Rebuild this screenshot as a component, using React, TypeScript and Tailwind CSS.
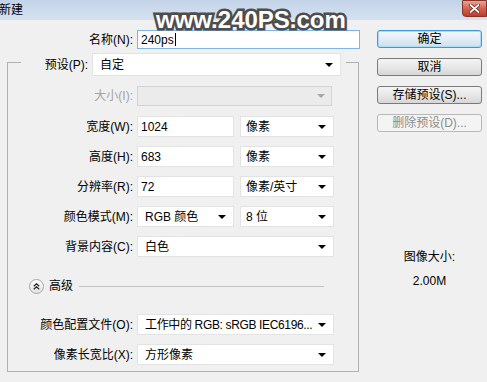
import React from "react";

const Arrow = ({ color = "#000" }: { color?: string }) => (
  <svg width="8" height="4" viewBox="0 0 8 4" className="shrink-0">
    <path d="M0 0H8L4 4Z" fill={color} />
  </svg>
);

const Select = ({
  text,
  w,
  h = "h-[21px]",
  pl = "pl-[7px]",
  tight,
}: {
  text: string;
  w: string;
  h?: string;
  pl?: string;
  tight?: boolean;
}) => (
  <div
    className={`${w} ${h} ${pl} pr-[7px] bg-white border border-[#e3e3e3] flex items-center justify-between box-border`}
  >
    <span className={`leading-none whitespace-nowrap ${tight ? "tracking-[-0.35px]" : ""}`}>{text}</span>
    <Arrow />
  </div>
);

const Input = ({ text, w }: { text: string; w: string }) => (
  <div
    className={`${w} h-[21px] pl-[3px] bg-white border border-[#e3e3e3] flex items-center box-border`}
  >
    <span className="leading-none">{text}</span>
  </div>
);

const Label = ({ text, gray }: { text: string; gray?: boolean }) => (
  <div
    className={`w-[129px] text-right pr-[4px] leading-none whitespace-nowrap ${gray ? "text-[#a3a3a3]" : "text-black"}`}
  >
    {text}
  </div>
);

const Btn = ({
  text,
  kind = "normal",
}: {
  text: string;
  kind?: "default" | "normal" | "disabled";
}) => {
  const cls =
    kind === "default"
      ? "border-[#3c9ad8] bg-gradient-to-b from-[#f2f7fb] via-[#e3edf5] to-[#cfdfeb] shadow-[inset_0_0_0_1px_#a8dcf8] text-black"
      : kind === "disabled"
      ? "border-[#b8b8b8] bg-[#f4f4f4] text-[#8d8d8d]"
      : "border-[#7a7a7a] bg-gradient-to-b from-[#f4f4f4] via-[#e8e8e8] to-[#d6d6d6] text-black";
  return (
    <div
      className={`w-[105px] h-[18px] rounded-[3px] border ${cls} flex items-center justify-center text-[12px] leading-none box-border`}
    >
      {text}
    </div>
  );
};

export default function App() {
  return (
    <div
      className="relative w-[487px] h-[382px] bg-[#f0f0f0] overflow-hidden text-[12px] text-black"
      style={{ fontFamily: '"Liberation Sans", "Noto Sans CJK SC", sans-serif' }}
    >
      {/* Title bar */}
      <div className="h-[20px] bg-gradient-to-b from-[#c3d3e8] to-[#d6e2f1] flex items-center justify-between">
        <span className="-ml-[1px] leading-none text-[12px] text-black">新建</span>
        <div className="w-[25px] h-[17px] self-start rounded-bl-[4px] border border-[#8a3226] bg-gradient-to-b from-[#e4a597] via-[#d0624f] to-[#c0392b] flex items-center justify-center">
          <svg width="11" height="9" viewBox="0 0 11 9">
            <path
              d="M1.5 1L9.5 8M9.5 1L1.5 8"
              stroke="#5a1a12"
              strokeWidth="3.2"
              strokeLinecap="round"
            />
            <path
              d="M1.5 1L9.5 8M9.5 1L1.5 8"
              stroke="#ffffff"
              strokeWidth="1.8"
              strokeLinecap="round"
            />
          </svg>
        </div>
      </div>

      {/* Body */}
      <div className="flex">
        {/* Left column */}
        <div className="w-[360px] flex flex-col">
          {/* Name row */}
          <div className="mt-[10px] flex items-center">
            <div className="w-[137px] text-right pr-[4px] leading-none">名称(N):</div>
            <div className="w-[223px] h-[19px] bg-white border border-[#7eb4ea] flex items-center pl-[3px] box-border">
              <span className="leading-none">240ps</span>
              <span className="w-px h-[13px] bg-black ml-[1px]" />
            </div>
          </div>

          {/* Group box */}
          <div className="mt-[13px] ml-[7px] w-[352px] border border-[#b1b1b1] flex flex-col pb-[6px]">
            {/* Preset row overlapping top border */}
            <div className="-mt-[10px] ml-[13px] w-fit pr-[5px] bg-[#f0f0f0] flex items-center">
              <div className="w-[71px] text-right pr-[4px] leading-none">预设(P):</div>
              <Select text="自定" w="w-[249px]" h="h-[23px]" />
            </div>

            <div className="mt-[10px] flex items-center">
              <Label text="大小(I):" gray />
              <div className="w-[195px] h-[20px] bg-[#ebebeb] border border-[#d4d4d4] flex items-center justify-end pr-[6px] box-border">
                <Arrow color="#a8a8a8" />
              </div>
            </div>

            <div className="mt-[10px] flex items-center">
              <Label text="宽度(W):" />
              <Input text="1024" w="w-[97px]" />
              <div className="ml-[6px]">
                <Select text="像素" w="w-[94px]" pl="pl-[5px]" />
              </div>
            </div>

            <div className="mt-[9px] flex items-center">
              <Label text="高度(H):" />
              <Input text="683" w="w-[97px]" />
              <div className="ml-[6px]">
                <Select text="像素" w="w-[94px]" pl="pl-[5px]" />
              </div>
            </div>

            <div className="mt-[9px] flex items-center">
              <Label text="分辨率(R):" />
              <Input text="72" w="w-[97px]" />
              <div className="ml-[6px]">
                <Select text="像素/英寸" w="w-[94px]" pl="pl-[5px]" />
              </div>
            </div>

            <div className="mt-[9px] flex items-center">
              <Label text="颜色模式(M):" />
              <Select text="RGB 颜色" w="w-[97px]" />
              <div className="ml-[6px]">
                <Select text="8 位" w="w-[94px]" pl="pl-[5px]" />
              </div>
            </div>

            <div className="mt-[9px] flex items-center">
              <Label text="背景内容(C):" />
              <Select text="白色" w="w-[197px]" />
            </div>

            {/* Advanced */}
            <div className="mt-[21px] h-[16px] flex items-center">
              <div className="ml-[21px] w-[15px] h-[15px] rounded-full border border-[#a7a7a7] bg-gradient-to-b from-white to-[#e2e2e2] flex items-center justify-center box-border">
                <svg width="7" height="7" viewBox="0 0 7 7">
                  <path
                    d="M0.8 3.2L3.5 0.8L6.2 3.2M0.8 6.2L3.5 3.8L6.2 6.2"
                    stroke="#222"
                    strokeWidth="1.2"
                    fill="none"
                  />
                </svg>
              </div>
              <span className="ml-[5px] leading-none">高级</span>
              <div className="ml-[6px] w-[245px] h-px bg-[#c4c4c4]" />
            </div>

            <div className="mt-[20px] flex items-center">
              <Label text="颜色配置文件(O):" />
              <Select text="工作中的 RGB: sRGB IEC6196..." w="w-[197px]" tight />
            </div>

            <div className="mt-[9px] flex items-center">
              <Label text="像素长宽比(X):" />
              <Select text="方形像素" w="w-[197px]" />
            </div>
          </div>
        </div>

        {/* Right column */}
        <div className="ml-[17px] pt-[10px] flex flex-col">
          <div className="flex flex-col gap-[10px]">
            <Btn text="确定" kind="default" />
            <Btn text="取消" />
            <Btn text="存储预设(S)..." />
            <Btn text="删除预设(D)..." kind="disabled" />
          </div>
          <div className="mt-[117px] w-[105px] text-center leading-[16px]">图像大小:</div>
          <div className="mt-[8px] w-[105px] text-center leading-[16px]">2.00M</div>
        </div>
      </div>

      {/* Watermark overlay */}
      <div
        className="absolute left-[156px] top-[8px] text-[24px] font-bold leading-none text-white [-webkit-text-stroke:5px_#4d4d4d] [paint-order:stroke_fill]"
        style={{ fontFamily: '"Liberation Sans", Arial, sans-serif' }}
      >
        www.240PS.com
      </div>
    </div>
  );
}
